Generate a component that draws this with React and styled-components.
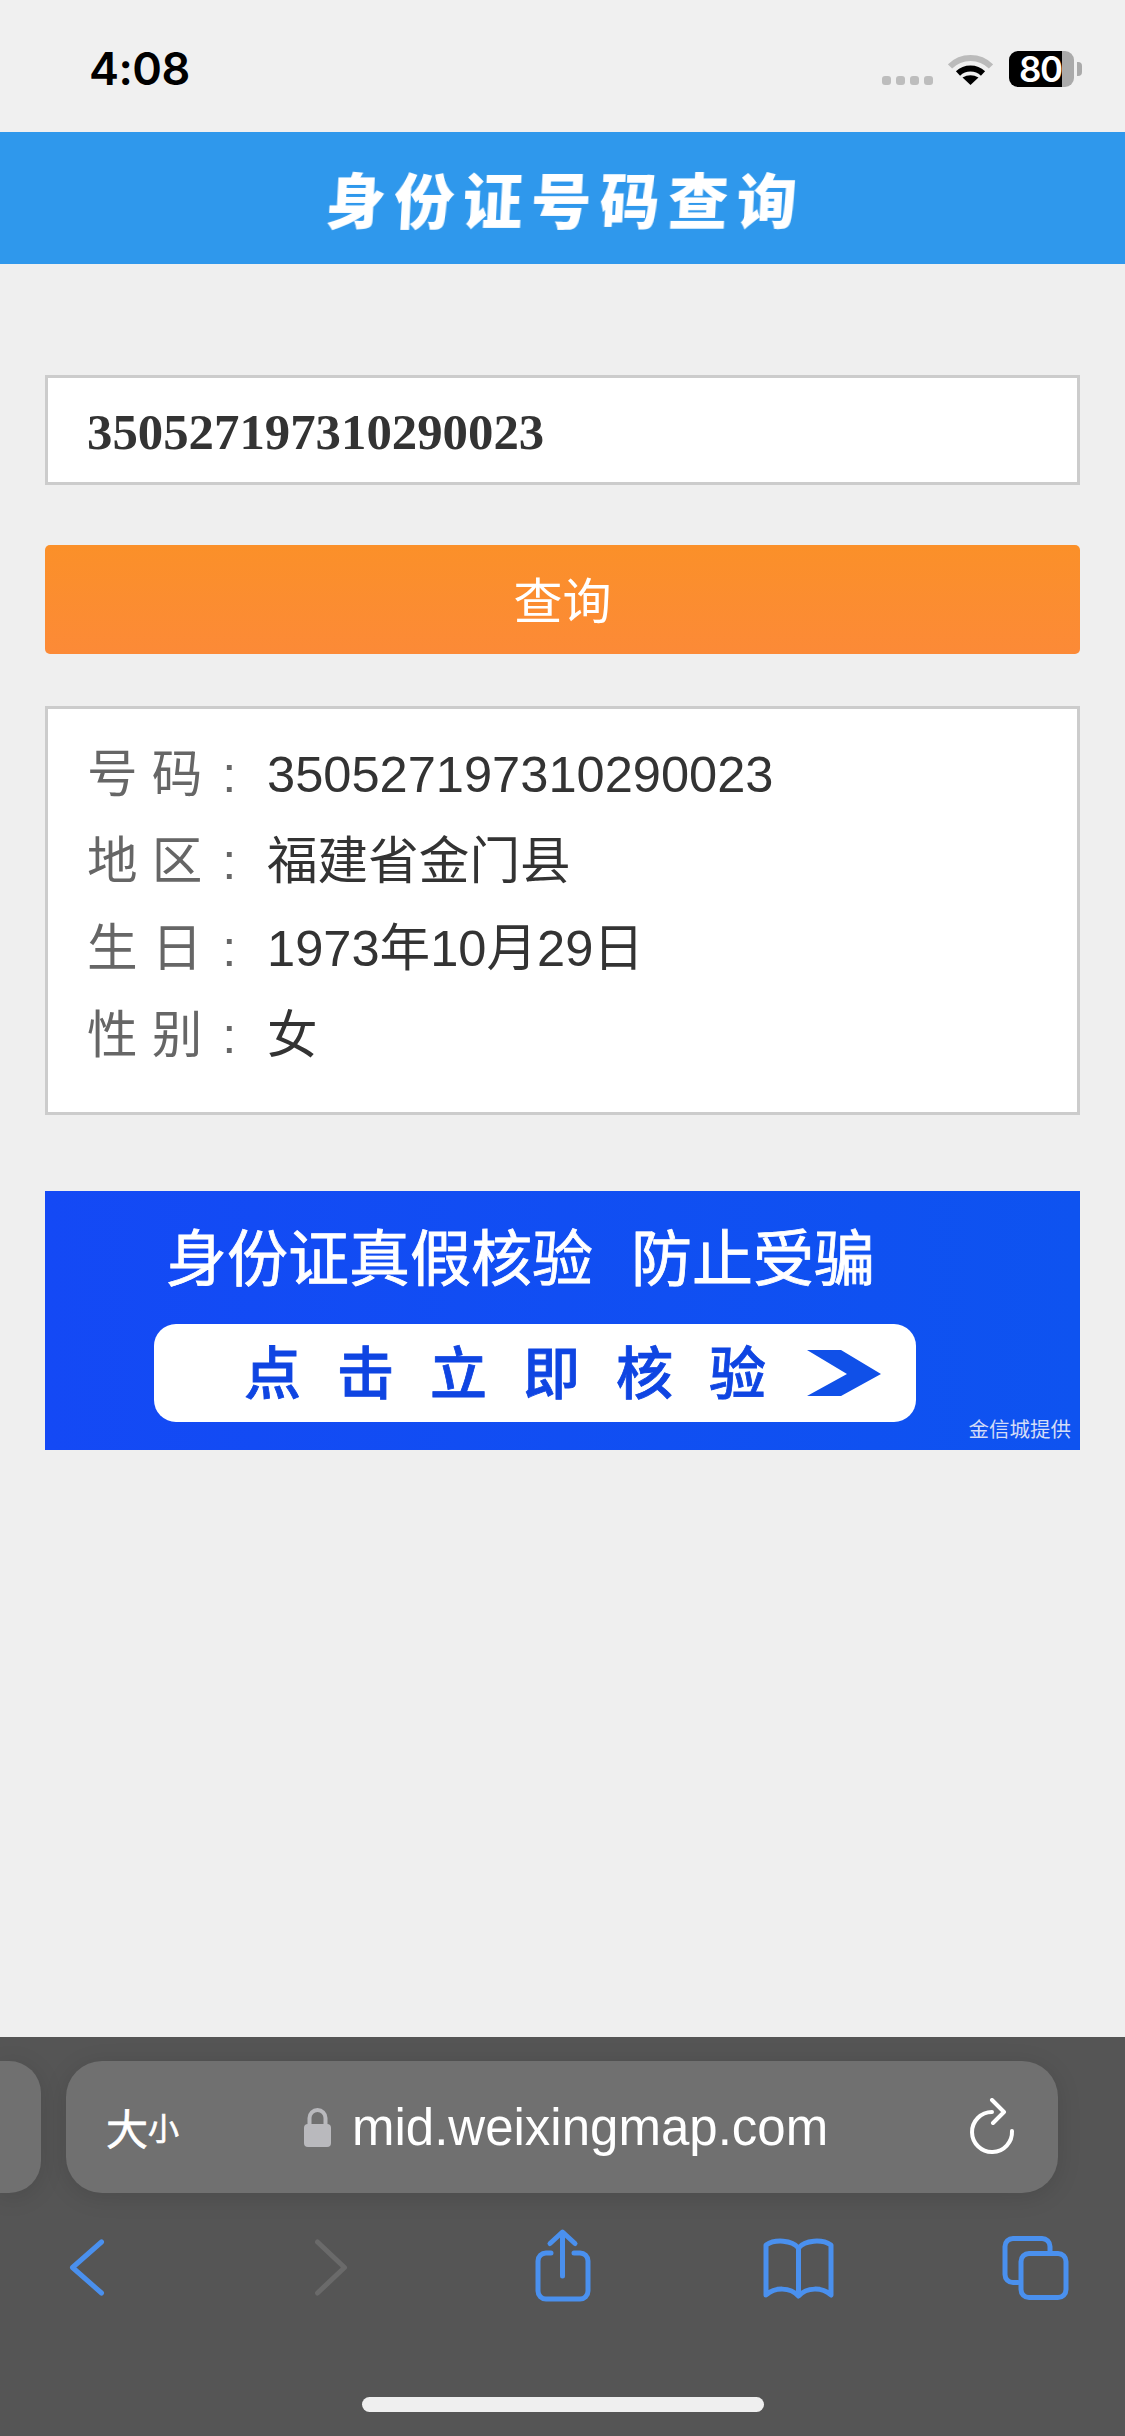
import React from "react";
import styled, { createGlobalStyle } from "styled-components";

const sans = `"Liberation Sans", "Noto Sans CJK SC", sans-serif`;
const blue = "#4a90ee";

const GlobalStyle = createGlobalStyle`
  html, body {
    margin: 0;
    padding: 0;
    background: #efefef;
    overflow-x: hidden;
  }
  * {
    box-sizing: border-box;
  }
`;

const Page = styled.div`
  display: flex;
  flex-direction: column;
  width: 1125px;
  height: 2436px;
  overflow: hidden;
  font-family: ${sans};
`;

const StatusBar = styled.div`
  display: flex;
  justify-content: space-between;
  align-items: flex-start;
  height: 132px;
  padding: 51px 43px 0 89px;
  background: #f0f0f0;
`;

const Time = styled.div`
  font-family: Inter, sans-serif;
  font-size: 45px;
  font-weight: 600;
  line-height: 36px;
  letter-spacing: -0.5px;
  color: #000;
`;

const StatusIcons = styled.div`
  display: flex;
  align-items: flex-end;
  height: 36px;
`;

const SignalDots = styled.div`
  display: flex;
  gap: 5px;
  margin: 0 15px 2px 0;
`;

const SignalDot = styled.span`
  width: 9px;
  height: 9px;
  border-radius: 3px;
  background: #bdbdbd;
`;

const WifiIcon = styled.svg`
  width: 45px;
  height: 33px;
  margin: 0 16px 2px 0;
`;

const Battery = styled.div`
  width: 65px;
  height: 36px;
  padding-left: 10px;
  border-radius: 9px;
  background: linear-gradient(90deg, #000 53px, #aaa 53px);
  color: #fff;
  font-family: Inter, sans-serif;
  font-size: 35px;
  font-weight: 600;
  line-height: 36px;
  letter-spacing: -1.5px;
`;

const BatteryNub = styled.span`
  width: 5px;
  height: 14px;
  margin: 0 0 11px 3px;
  border-radius: 0 4px 4px 0;
  background: #aaa;
`;

const Header = styled.div`
  display: flex;
  justify-content: center;
  align-items: center;
  height: 132px;
  background: #2f98ec;
`;

const HeaderTitle = styled.h1`
  margin: 0;
  padding-left: 6px;
  color: #fff;
  font-family: "Noto Sans CJK SC", sans-serif;
  font-size: 60px;
  font-weight: 900;
  line-height: 70px;
  letter-spacing: 8.5px;
  transform: skewX(-3deg);
  filter: blur(0.6px);
`;

const Main = styled.main`
  flex: 1;
  display: flex;
  flex-direction: column;
  padding: 111px 45px 0;
`;

const SearchInput = styled.input`
  width: 100%;
  height: 110px;
  padding: 4px 0 0 39px;
  border: 3px solid #ccc;
  border-radius: 0;
  outline: none;
  background: #fff;
  color: #333;
  font-family: "Liberation Serif", serif;
  font-size: 50.8px;
  font-weight: 700;
`;

const SearchButton = styled.button`
  width: 100%;
  height: 109px;
  margin-top: 60px;
  padding: 5px 0 0;
  border: none;
  border-radius: 5px;
  background: linear-gradient(180deg, #fb9029, #fc8a37);
  color: #fff;
  font-family: ${sans};
  font-size: 49px;
  line-height: 1;
`;

const ResultCard = styled.section`
  margin-top: 52px;
  padding: 22px 0 33px 39px;
  border: 3px solid #ccc;
  background: #fff;
`;

const ResultRow = styled.div`
  display: flex;
  align-items: baseline;
  height: 87px;
  font-size: 50.6px;
  line-height: 87px;
`;

const ResultLabel = styled.span`
  width: 180px;
  color: #666;
  white-space: pre;
`;

const LabelColon = styled.span`
  margin-left: 20px;
`;

const ResultValue = styled.span`
  color: #333;
`;

const Banner = styled.a`
  position: relative;
  display: flex;
  flex-direction: column;
  align-items: flex-start;
  height: 259px;
  margin-top: 76px;
  padding: 24px 0 0 109px;
  background: linear-gradient(90deg, #1449f5, #0e53f0);
`;

const BannerTitle = styled.div`
  display: flex;
  gap: 38px;
  padding-left: 12px;
  color: #fff;
  font-family: "Noto Sans CJK SC", sans-serif;
  font-size: 61px;
  line-height: 80px;
  -webkit-text-stroke: 0.8px #fff;
`;

const BannerButton = styled.div`
  display: flex;
  align-items: center;
  justify-content: space-between;
  width: 762px;
  height: 98px;
  margin-top: 29px;
  padding: 0 35px 0 90px;
  border-radius: 22px;
  background: #fff;
`;

const BannerAction = styled.span`
  margin-top: -8px;
  color: #0f45e2;
  font-family: "Noto Sans CJK SC", sans-serif;
  font-size: 57px;
  font-weight: 500;
  letter-spacing: 36px;
  white-space: nowrap;
  -webkit-text-stroke: 0.8px #0f45e2;
`;

const BannerArrow = styled.svg`
  width: 74px;
  height: 46px;
`;

const BannerCredit = styled.span`
  position: absolute;
  right: 9px;
  bottom: 10px;
  color: #d3dcf7;
  font-family: "Noto Sans CJK SC", sans-serif;
  font-size: 20.5px;
  line-height: 24px;
`;

const BottomBar = styled.footer`
  height: 399px;
  padding-top: 24px;
  background: #555;
`;

const TabStrip = styled.div`
  display: flex;
  gap: 25px;
  height: 132px;
`;

const PeekTab = styled.div`
  width: 41px;
  border-radius: 0 32px 32px 0;
  background: #707070;
  box-shadow: 0 4px 24px rgba(0, 0, 0, 0.12);
`;

const AddressPill = styled.div`
  display: flex;
  align-items: center;
  width: 992px;
  padding: 0 43px 0 40px;
  border-radius: 36px;
  background: #707070;
  box-shadow: 0 4px 24px rgba(0, 0, 0, 0.12);
`;

const TextSize = styled.div`
  display: flex;
  align-items: flex-end;
  width: 198px;
  color: #fff;
  font-family: "Noto Sans CJK SC", sans-serif;
  -webkit-text-stroke: 0.7px #fff;
`;

const TextSizeGlyph = styled.span`
  font-size: ${(p) => p.$size}px;
  line-height: 46px;
`;

const LockIcon = styled.svg`
  width: 27px;
  height: 39px;
  margin-right: 21px;
`;

const Url = styled.span`
  margin-top: 2px;
  color: #fff;
  font-size: 51px;
  line-height: 60px;
`;

const ReloadIcon = styled.svg`
  width: 46px;
  height: 58px;
  margin-left: auto;
`;

const Toolbar = styled.nav`
  display: grid;
  grid-template-columns: repeat(5, 237px);
  justify-content: center;
  margin-top: 32px;
`;

const ToolButton = styled.div`
  display: flex;
  justify-content: center;
`;

const ToolIcon = styled.svg`
  width: 100px;
  height: 90px;
  fill: none;
  stroke: ${(p) => p.$color || blue};
  stroke-width: 5px;
  stroke-linecap: round;
  stroke-linejoin: round;
`;

const HomeIndicator = styled.div`
  width: 402px;
  height: 15px;
  margin: 82px auto 0;
  border-radius: 8px;
  background: #efefef;
`;

const results = [
  { label: "号 码", value: "350527197310290023" },
  { label: "地 区", value: "福建省金门县" },
  { label: "生 日", value: "1973年10月29日" },
  { label: "性 别", value: "女" },
];

const App = () => {
  return (
    <Page>
      <GlobalStyle />
      <StatusBar>
        <Time>4:08</Time>
        <StatusIcons>
          <SignalDots>
            <SignalDot />
            <SignalDot />
            <SignalDot />
            <SignalDot />
          </SignalDots>
          <WifiIcon viewBox="0 0 45 33" fill="none">
            <path d="M2 14.5 A 29 29 0 0 1 43 14.5" stroke="#bbb" strokeWidth="6" />
            <path d="M10 21.5 A 18 18 0 0 1 35 21.5" stroke="#000" strokeWidth="6" />
            <path d="M22.5 33 L14.5 25.5 Q22.5 21 30.5 25.5 Z" fill="#000" />
          </WifiIcon>
          <Battery>80</Battery>
          <BatteryNub />
        </StatusIcons>
      </StatusBar>

      <Header>
        <HeaderTitle>身份证号码查询</HeaderTitle>
      </Header>

      <Main>
        <SearchInput readOnly value="350527197310290023" />
        <SearchButton>查询</SearchButton>
        <ResultCard>
          {results.map((row) => (
            <ResultRow key={row.label}>
              <ResultLabel>
                {row.label}
                <LabelColon>:</LabelColon>
              </ResultLabel>
              <ResultValue>{row.value}</ResultValue>
            </ResultRow>
          ))}
        </ResultCard>
        <Banner>
          <BannerTitle>
            <span>身份证真假核验</span>
            <span>防止受骗</span>
          </BannerTitle>
          <BannerButton>
            <BannerAction>点击立即核验</BannerAction>
            <BannerArrow viewBox="0 0 74 46">
              <path d="M0 0 H34 L74 24 L34 46 H0 L40 24 Z" fill="#1050e8" />
            </BannerArrow>
          </BannerButton>
          <BannerCredit>金信城提供</BannerCredit>
        </Banner>
      </Main>

      <BottomBar>
        <TabStrip>
          <PeekTab />
          <AddressPill>
            <TextSize>
              <TextSizeGlyph $size={42}>大</TextSizeGlyph>
              <TextSizeGlyph $size={31}>小</TextSizeGlyph>
            </TextSize>
            <LockIcon viewBox="0 0 27 39">
              <path d="M5.5 18 V10 a8 8 0 0 1 16 0 V18" fill="none" stroke="#b9b9bd" strokeWidth="4" />
              <rect x="0" y="16" width="27" height="23" rx="4" fill="#b9b9bd" />
            </LockIcon>
            <Url>mid.weixingmap.com</Url>
            <ReloadIcon viewBox="0 0 46 58" fill="none" stroke="#fff" strokeWidth="4" strokeLinecap="round" strokeLinejoin="round">
              <path d="M43 33 A 20 20 0 1 1 23 14" />
              <path d="M23 2 L35 14 L24 25" />
            </ReloadIcon>
          </AddressPill>
        </TabStrip>
        <Toolbar>
          <ToolButton>
            <ToolIcon viewBox="0 0 100 90">
              <path d="M62.5 17 L33.5 42.5 L62.5 68" />
            </ToolIcon>
          </ToolButton>
          <ToolButton>
            <ToolIcon viewBox="0 0 100 90" $color="#6a6a6a">
              <path d="M41.5 17 L68.5 42.5 L41.5 68" />
            </ToolIcon>
          </ToolButton>
          <ToolButton>
            <ToolIcon viewBox="0 0 100 90">
              <path d="M38 28 H33 a8 8 0 0 0 -8 8 V66 a8 8 0 0 0 8 8 H67 a8 8 0 0 0 8 -8 V36 a8 8 0 0 0 -8 -8 H61" />
              <path d="M49.5 8 V51" />
              <path d="M37 18.5 L49.5 7 L62 18.5" />
            </ToolIcon>
          </ToolButton>
          <ToolButton>
            <ToolIcon viewBox="0 0 100 90">
              <path d="M48.5 23 C42 15 25 14 16 20 V70 C25 62 40 62 48.5 71 C57 62 72 62 81 70 V20 C72 14 55 15 48.5 23 Z" />
              <path d="M48.5 23 V70" />
            </ToolIcon>
          </ToolButton>
          <ToolButton>
            <ToolIcon viewBox="0 0 100 90">
              <path d="M31 57.5 H26 a8 8 0 0 1 -8 -8 V21.5 a8 8 0 0 1 8 -8 H55 a8 8 0 0 1 8 8 V28" />
              <rect x="34" y="28.5" width="45" height="44" rx="8" />
            </ToolIcon>
          </ToolButton>
        </Toolbar>
        <HomeIndicator />
      </BottomBar>
    </Page>
  );
};

export default App;
